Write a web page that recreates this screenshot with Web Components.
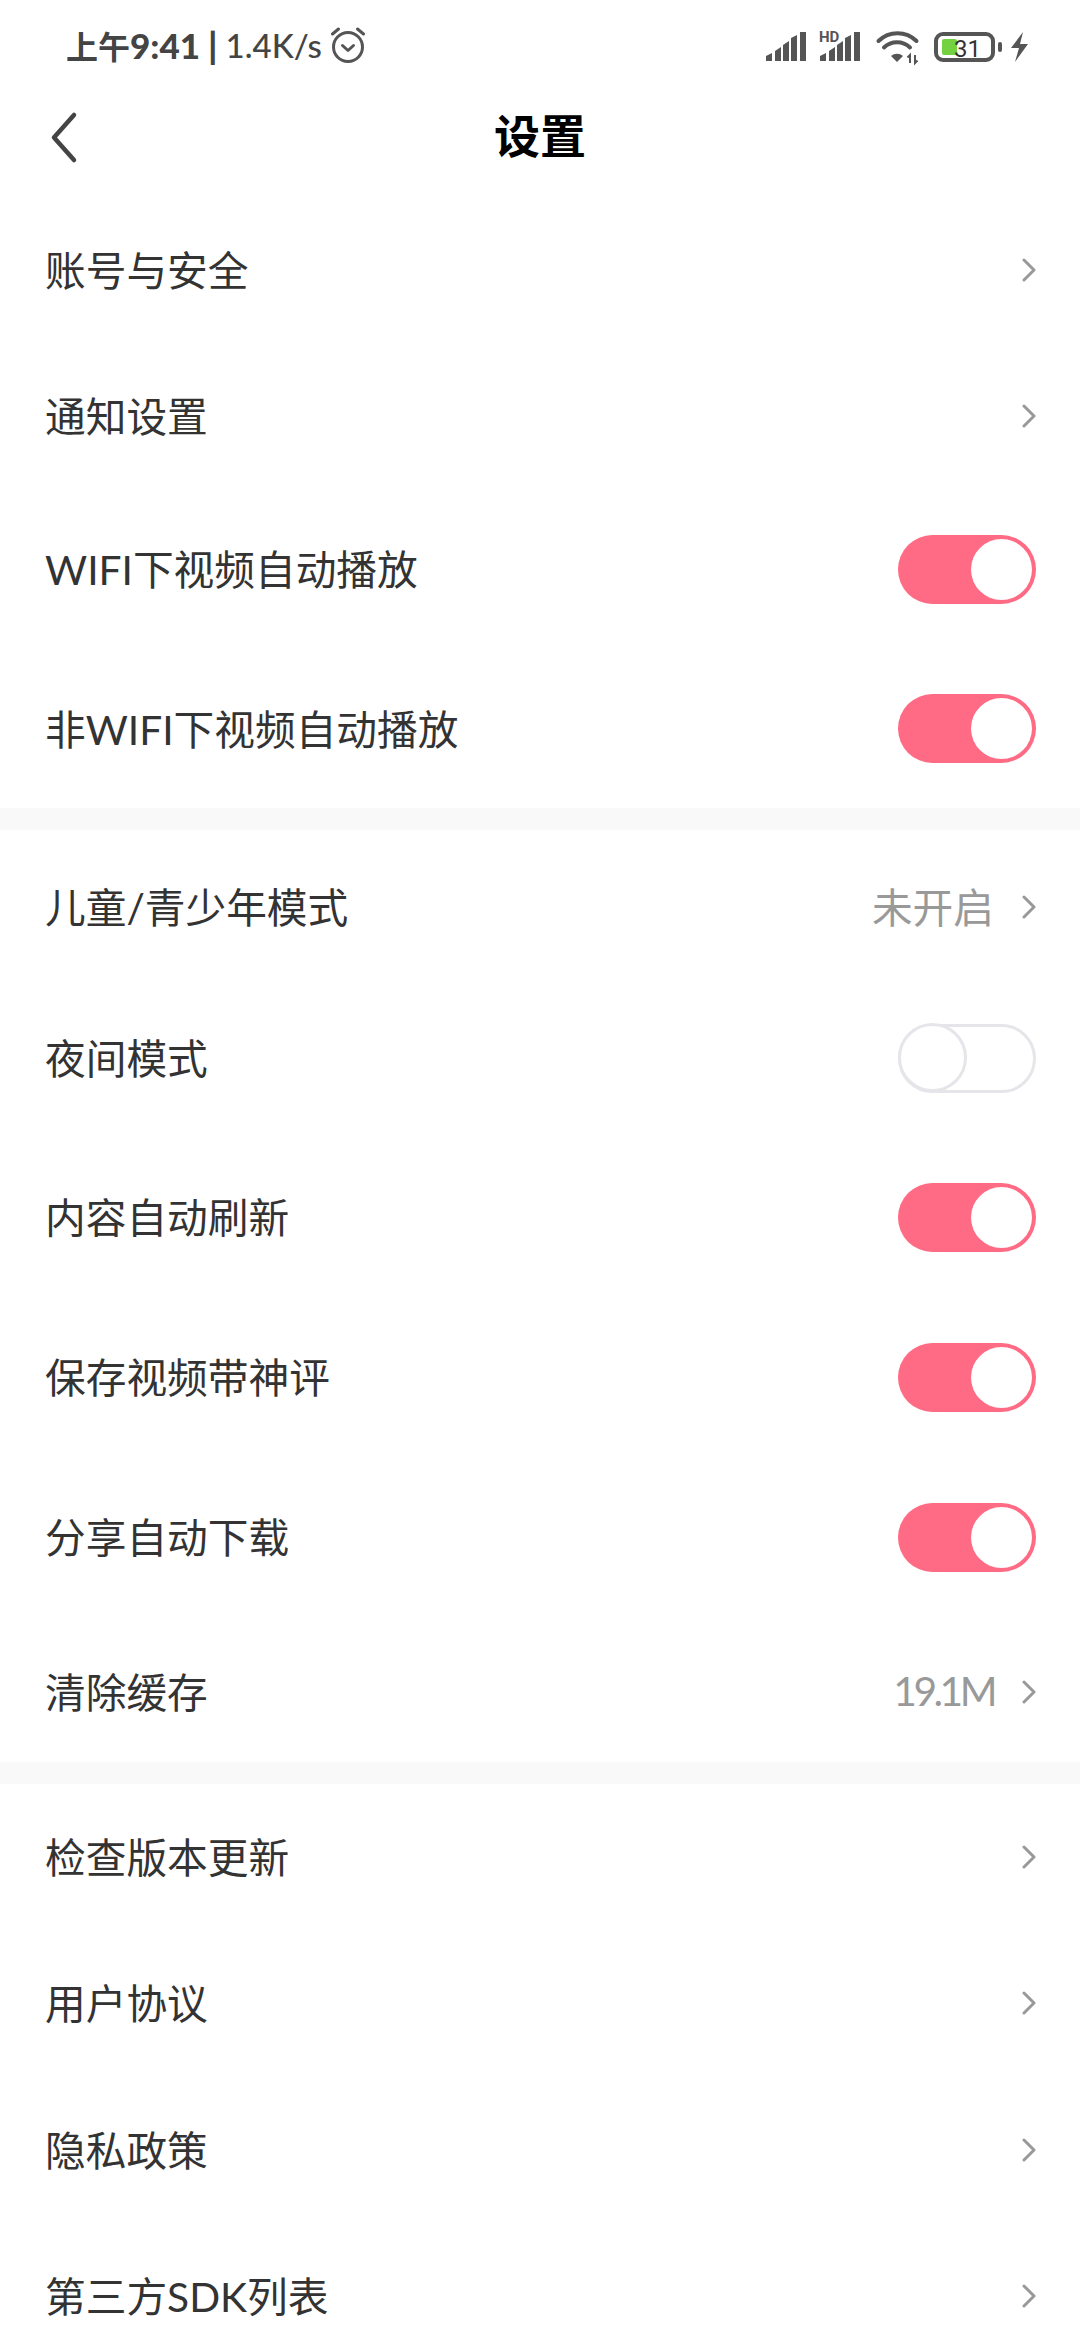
<!DOCTYPE html>
<html>
<head>
<meta charset="utf-8">
<style>
  html, body { margin: 0; padding: 0; background: #fff; height: 2340px; overflow: hidden; }
  body { width: 1080px; font-family: "Lato", "Noto Sans CJK SC", sans-serif; }
</style>
</head>
<body>
<status-bar></status-bar>
<nav-bar>设置</nav-bar>
<set-row h="146" arrow>账号与安全</set-row>
<set-row h="146" arrow>通知设置</set-row>
<set-row h="160" on>WIFI下视频自动播放</set-row>
<set-row h="159" on>非WIFI下视频自动播放</set-row>
<set-gap></set-gap>
<set-row h="154" arrow value="未开启">儿童/青少年模式</set-row>
<set-row h="153" off style="padding-bottom:5px">夜间模式</set-row>
<set-row h="160" on>内容自动刷新</set-row>
<set-row h="160" on>保存视频带神评</set-row>
<set-row h="160" on>分享自动下载</set-row>
<set-row h="145" arrow value="19.1M" tight style="padding-top:5px">清除缓存</set-row>
<set-gap></set-gap>
<set-row h="146" arrow>检查版本更新</set-row>
<set-row h="146" arrow>用户协议</set-row>
<set-row h="147" arrow>隐私政策</set-row>
<set-row h="146" arrow>第三方SDK列表</set-row>

<script>
const barTemplate = document.createElement('template');
barTemplate.innerHTML = `
    <style>
        :host { display: flex; align-items: center; height: 90px; padding: 0 50px 0 66px; box-sizing: border-box; color: #444; }
        .left { display: flex; align-items: center; flex: 1; font: 500 33px "Lato", "Noto Sans CJK SC", sans-serif; white-space: nowrap; }
        .time { font-weight: 700; font-size: 32px; }
        .time b { font-size: 35px; }
        .pipe { font-weight: 900; font-size: 36px; margin: 0 8px; }
        .alarm { margin-left: 8px; }
        svg { display: block; }
    </style>
    <div class="left"><span class="time">上午<b>9:41</b></span><span class="pipe">|</span><span>1.4K/s</span>
        <svg class="alarm" width="36" height="36" viewBox="0 0 36 36" fill="none" stroke="#555" stroke-width="3" stroke-linecap="round" stroke-linejoin="round">
            <circle cx="18" cy="20" r="14.500"/><path d="M12.500 18.500l5.500 5 5.500-5"/><path d="M2.500 7 8.500 2M33.500 7 27.500 2"/>
        </svg>
    </div>
    <svg width="270" height="50" viewBox="760 20 270 50" fill="#555">
        <path d="M766 56l6-3v8h-6zM775 51l6-4v14h-6zM783 45l6-4v20h-6zM791 38l6-3v26h-6zM800 32h6v29h-6z"/>
        <path d="M820 56l6-3v8h-6zM829 51l6-4v14h-6zM837 45l6-4v20h-6zM845 38l6-3v26h-6zM854 32h6v29h-6z"/>
        <text x="819" y="42" font-family="Roboto, sans-serif" font-weight="700" font-size="15">HD</text>
        <path d="M878.500 41a27 27 0 0 1 38 0M884 47.500a19 19 0 0 1 26 0" fill="none" stroke="#555" stroke-width="4" stroke-linecap="round"/>
        <path d="M891 56a9 9 0 0 1 12 0l-6 6z"/>
        <path d="M910 63V55l-2.500 2.500M915 55v8l2.500-2.500" fill="none" stroke="#555" stroke-width="2"/>
        <rect x="936" y="34" width="57" height="26" rx="7" fill="#fff" stroke="#555" stroke-width="4"/>
        <rect x="942" y="39" width="15" height="16" rx="2" fill="#74d13f"/>
        <rect x="998" y="42" width="4" height="10" rx="2"/>
        <text x="954" y="57" font-family="Roboto, sans-serif" font-size="24" fill="#333">31</text>
        <path d="M1023 32 1011 48H1019L1015 62 1028 44H1020Z"/>
    </svg>
`;
class StatusBar extends HTMLElement {
    constructor() {
        super();
        this.attachShadow({ mode: 'open' });
        this.shadowRoot.appendChild(barTemplate.content.cloneNode(true));
    }
}

const navTemplate = document.createElement('template');
navTemplate.innerHTML = `
    <style>
        :host { display: flex; align-items: center; justify-content: center; position: relative; height: 107px; padding-bottom: 22px; box-sizing: border-box; }
        .title { font: 700 46px "Noto Sans CJK SC", sans-serif; color: #000; }
        svg { position: absolute; left: 48px; top: 21px; }
    </style>
    <svg width="32" height="56" viewBox="0 0 32 56" fill="none" stroke="#444" stroke-width="4.500" stroke-linecap="round" stroke-linejoin="round"><path d="M26 4 6 26.500 26 49"/></svg>
    <div class="title"><slot></slot></div>
`;
class NavBar extends HTMLElement {
    constructor() {
        super();
        this.attachShadow({ mode: 'open' });
        this.shadowRoot.appendChild(navTemplate.content.cloneNode(true));
    }
}

const rowTemplate = document.createElement('template');
rowTemplate.innerHTML = `
    <style>
        :host { display: flex; align-items: center; padding: 0 44px 0 45px; box-sizing: border-box; color: #333; font: 400 40.700px "Lato", "Noto Sans CJK SC", sans-serif; }
        .label { flex: 1; margin-bottom: 3px; }
        .value { color: #999; margin-right: 28px; margin-bottom: 3px; }
        :host([tight]) .value { letter-spacing: -3.500px; }
        .arrow { display: none; }
        :host([arrow]) .arrow { display: block; }
        .sw { display: none; width: 138px; height: 69px; box-sizing: border-box; border-radius: 35px; position: relative; }
        :host([on]) .sw { display: block; background: #ff6a84; }
        :host([off]) .sw { display: block; background: #fff; border: 3.500px solid #e6e6ea; }
        .knob { position: absolute; background: #fff; border-radius: 50%; box-sizing: border-box; }
        :host([on]) .knob { width: 61px; height: 61px; top: 4px; right: 4px; }
        :host([off]) .knob { width: 69px; height: 69px; top: -3.500px; left: -3.500px; border: 3.500px solid #e6e6ea; }
    </style>
    <div class="label"><slot></slot></div>
    <span class="value"></span>
    <svg class="arrow" width="14" height="24" viewBox="0 0 14 24" fill="none" stroke="#999" stroke-width="3" stroke-linecap="round" stroke-linejoin="round"><path d="M2 2 12 12 2 22"/></svg>
    <div class="sw"><div class="knob"></div></div>
`;
class SetRow extends HTMLElement {
    constructor() {
        super();
        this.attachShadow({ mode: 'open' });
        this.shadowRoot.appendChild(rowTemplate.content.cloneNode(true));
    }
    connectedCallback() {
        this.style.height = this.getAttribute('h') + 'px';
        const value = this.getAttribute('value');
        const el = this.shadowRoot.querySelector('.value');
        if (value) el.textContent = value; else el.style.display = 'none';
    }
}

const gapTemplate = document.createElement('template');
gapTemplate.innerHTML = `
    <style>
        :host { display: block; height: 22px; background: #f9f9f9; }
    </style>
`;
class SetGap extends HTMLElement {
    constructor() {
        super();
        this.attachShadow({ mode: 'open' });
        this.shadowRoot.appendChild(gapTemplate.content.cloneNode(true));
    }
}

window.customElements.define('status-bar', StatusBar);
window.customElements.define('nav-bar', NavBar);
window.customElements.define('set-row', SetRow);
window.customElements.define('set-gap', SetGap);
</script>
</body>
</html>
